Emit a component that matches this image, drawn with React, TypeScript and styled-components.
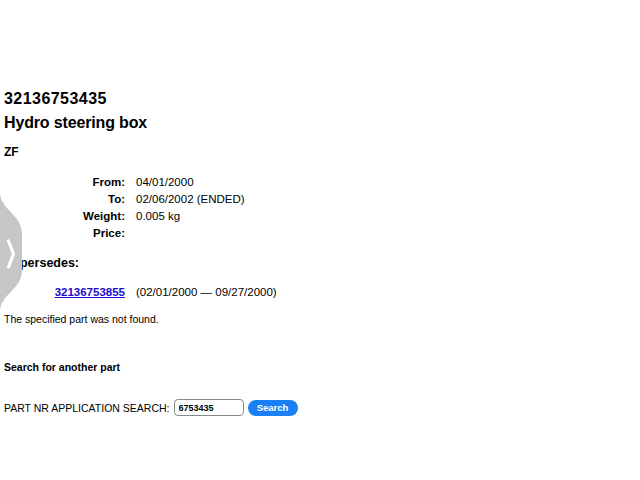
import React from 'react'
import styled, { createGlobalStyle } from 'styled-components'

const Global = createGlobalStyle`
  html, body { margin: 0; padding: 0; background: #fff; }
  body { font-family: "Liberation Sans", Arial, sans-serif; color: #000; }
`

const Page = styled.div`
  position: relative;
  width: 640px;
  height: 480px;
  padding: 89px 4px 0 4px;
  box-sizing: border-box;
  overflow: hidden;
`

const PartNo = styled.h1`
  margin: 0;
  font-size: 16px;
  line-height: 19px;
  font-weight: bold;
  letter-spacing: 0.45px;
`

const PartName = styled.h2`
  margin: 5px 0 0;
  font-size: 16px;
  line-height: 19px;
  font-weight: bold;
  letter-spacing: -0.15px;
`

const Maker = styled.h3`
  margin: 12px 0 0;
  font-size: 12px;
  line-height: 16px;
  font-weight: bold;
`

const InfoGrid = styled.div`
  display: grid;
  grid-template-columns: 121px auto;
  column-gap: 11px;
  row-gap: 2px;
  margin-top: 15px;
  font-size: 11.5px;
  line-height: 15px;
`

const Label = styled.span`
  text-align: right;
  font-weight: bold;
`

const Value = styled.span``

const Section = styled.h3`
  margin: 14px 0 0;
  font-size: 12.5px;
  line-height: 16px;
  font-weight: bold;
`

const LinkRow = styled.div`
  display: grid;
  grid-template-columns: 121px auto;
  column-gap: 11px;
  margin-top: 14px;
  font-size: 11.5px;
  line-height: 15px;
`

const PartLink = styled.a`
  justify-self: end;
  color: #1a0dcc;
  font-weight: bold;
  text-decoration: underline;
`

const Notice = styled.p`
  margin: 12px 0 0;
  font-size: 10.5px;
  line-height: 14px;
`

const SearchTitle = styled.h4`
  margin: 34px 0 0;
  font-size: 10.5px;
  line-height: 14px;
  font-weight: bold;
`

const SearchForm = styled.form`
  display: flex;
  align-items: center;
  gap: 4px;
  margin-top: 25px;
  font-size: 10.5px;
`

const SearchInput = styled.input`
  width: 70px;
  height: 17px;
  box-sizing: border-box;
  border: 1px solid #8a8a8a;
  border-radius: 4px;
  padding: 0 4px;
  font-family: "Liberation Sans", Arial, sans-serif;
  font-size: 9px;
  font-weight: bold;
  margin-left: 0;
`

const SearchButton = styled.button`
  height: 16px;
  width: 50px;
  border: none;
  border-radius: 8px;
  background: #1a7ff5;
  color: #fff;
  font-family: "Liberation Sans", Arial, sans-serif;
  font-size: 9.5px;
  font-weight: bold;
  padding: 0;
`

const SwipeTab = styled.div`
  position: absolute;
  left: 0;
  top: 192px;
  width: 24px;
  height: 120px;
`

export default function App() {
  return (
    <>
      <Global />
      <Page>
        <PartNo>32136753435</PartNo>
        <PartName>Hydro steering box</PartName>
        <Maker>ZF</Maker>
        <InfoGrid>
          <Label>From:</Label>
          <Value>04/01/2000</Value>
          <Label>To:</Label>
          <Value>02/06/2002 (ENDED)</Value>
          <Label>Weight:</Label>
          <Value>0.005 kg</Value>
          <Label>Price:</Label>
          <Value></Value>
        </InfoGrid>
        <Section>Supersedes:</Section>
        <LinkRow>
          <PartLink href="#">32136753855</PartLink>
          <span>(02/01/2000 — 09/27/2000)</span>
        </LinkRow>
        <Notice>The specified part was not found.</Notice>
        <SearchTitle>Search for another part</SearchTitle>
        <SearchForm onSubmit={(e) => e.preventDefault()}>
          <span>PART NR APPLICATION SEARCH:</span>
          <SearchInput defaultValue="6753435" />
          <SearchButton type="submit">Search</SearchButton>
        </SearchForm>
        <SwipeTab>
          <svg width="24" height="120" viewBox="0 0 24 120">
            <path
              d="M0 0 C0 18 22 22 22 42 L22 78 C22 98 0 102 0 120 Z"
              fill="#c6c6c6"
            />
            <path
              d="M8.5 49 L13.5 62 L8.5 75"
              stroke="#fff"
              strokeWidth="3.2"
              strokeLinecap="round"
              strokeLinejoin="round"
              fill="none"
            />
          </svg>
        </SwipeTab>
      </Page>
    </>
  )
}
